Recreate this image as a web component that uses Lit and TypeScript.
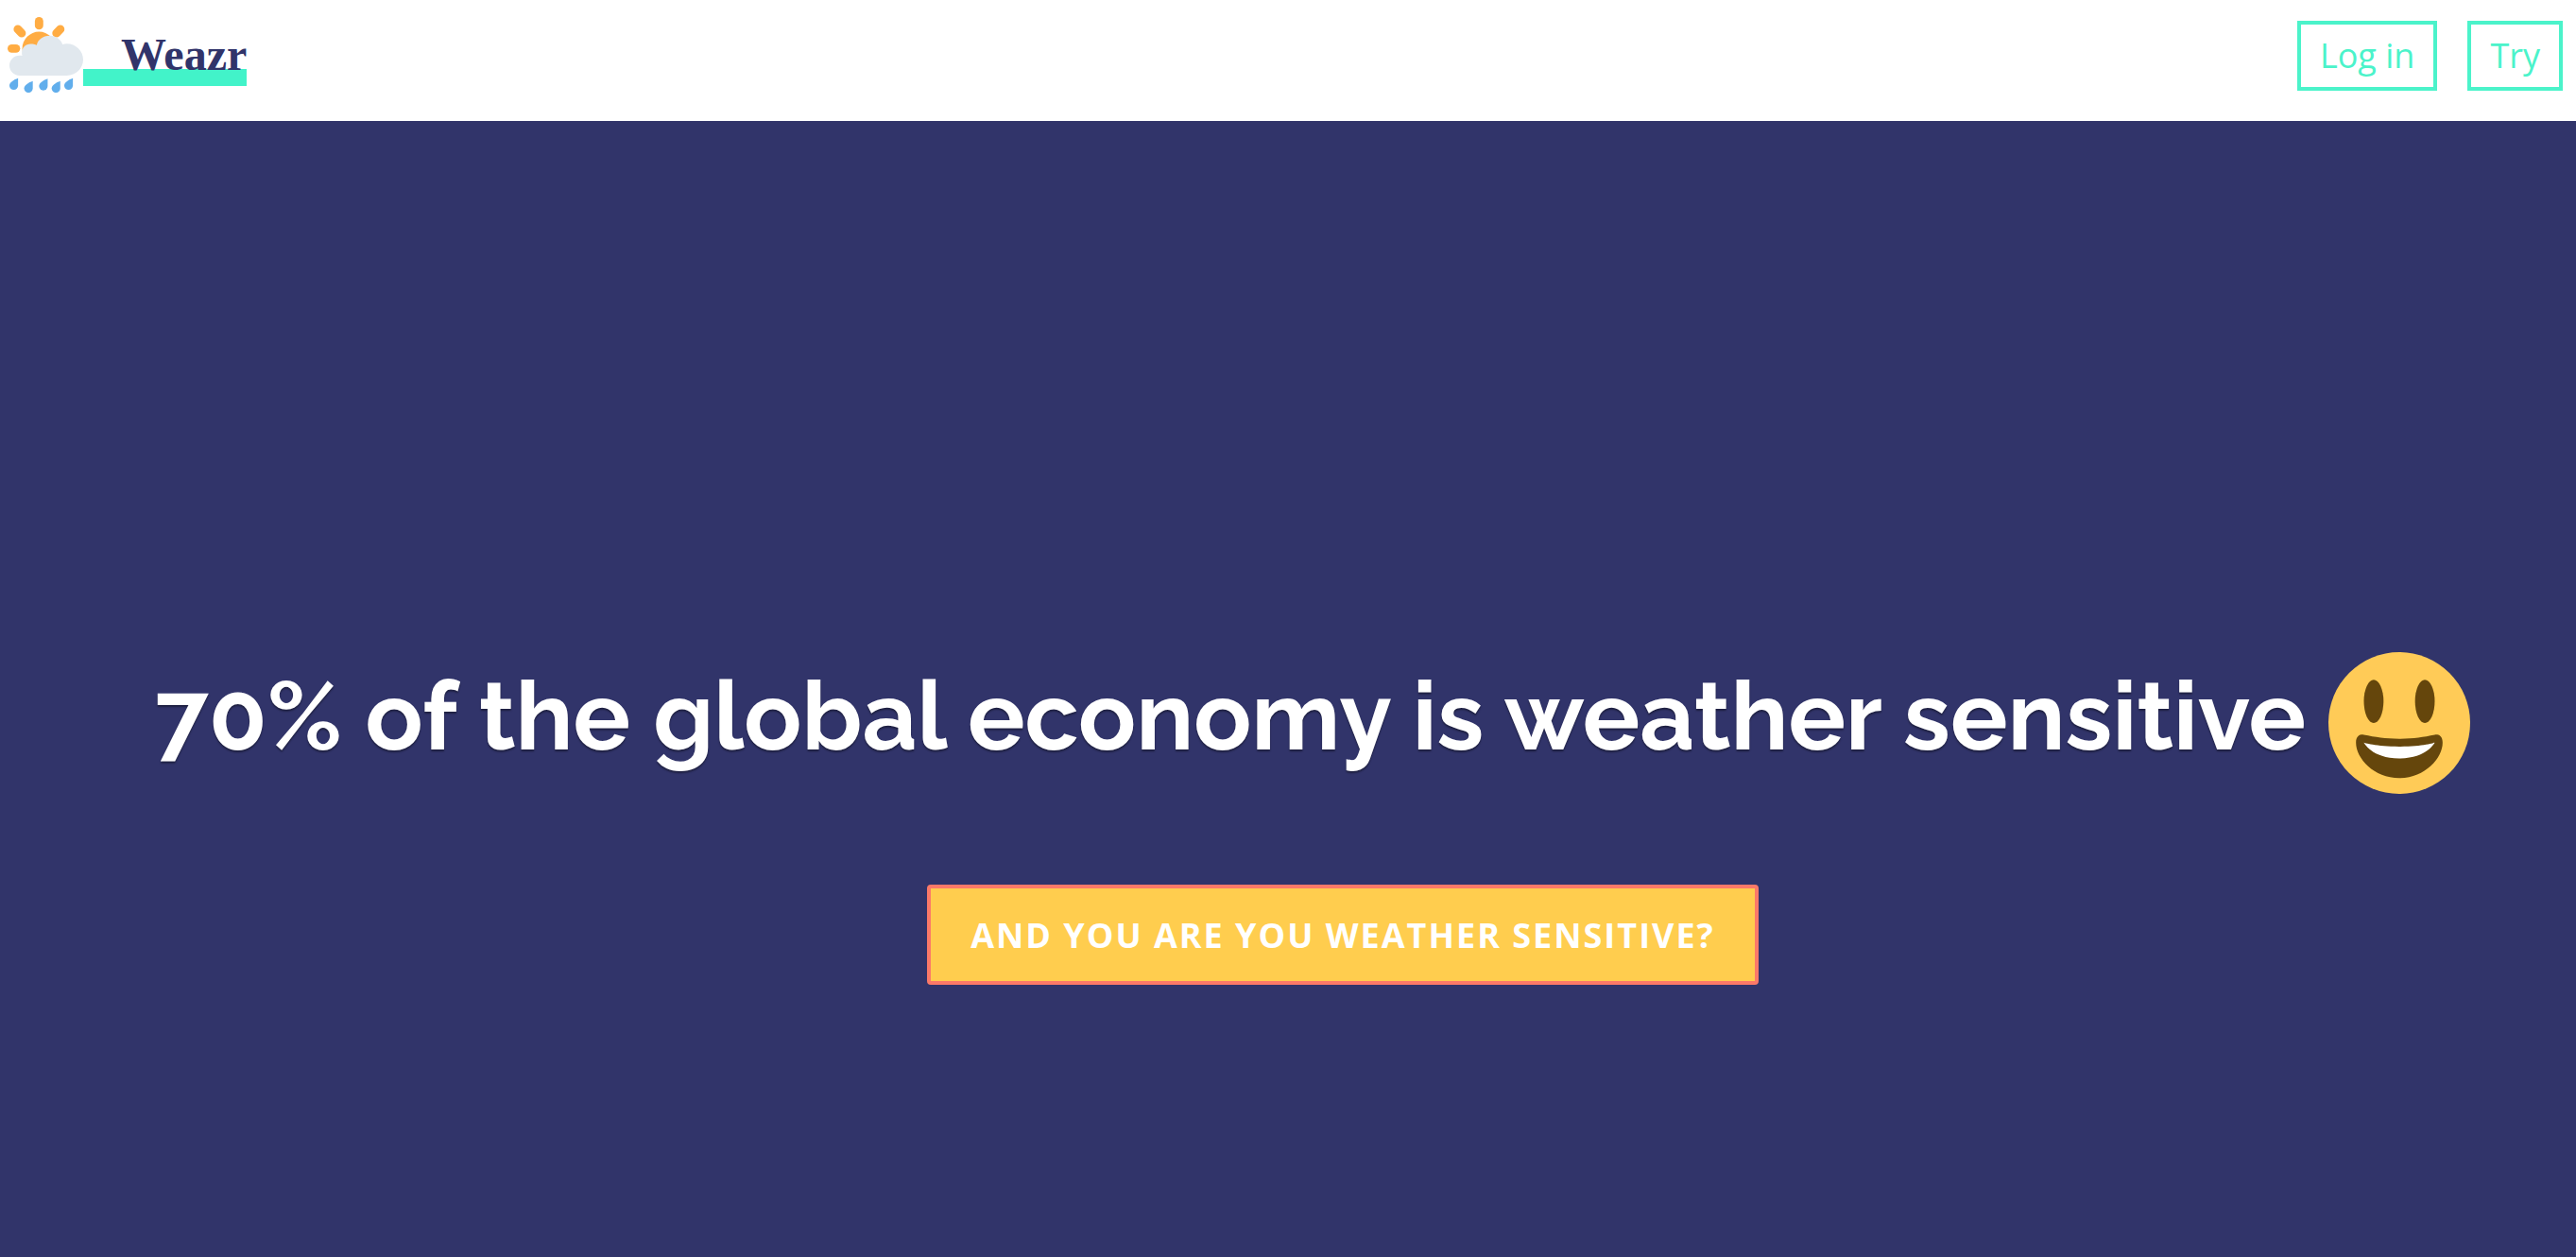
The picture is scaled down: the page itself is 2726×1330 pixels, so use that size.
import { LitElement, html, css, svg } from "lit";
import { customElement } from "lit/decorators.js";

const drops = [
  [0.9, 29.1],
  [7.9, 30.5],
  [15, 29.4],
  [21, 30.5],
  [27, 29.1],
];

@customElement("weather-logo")
class WeatherLogo extends LitElement {
  static styles = css`
    :host {
      display: block;
    }
    .icon {
      display: block;
      width: 80px;
      height: 80px;
    }
  `;

  render() {
    return html`
      <svg class="icon" viewBox="0 0 36 36" aria-hidden="true">
        <g fill="#ffac43">
          <rect x="13" y="0" width="4" height="6" rx="2" />
          <rect x="0" y="13" width="6" height="4" rx="2" />
          <rect x="2.5" y="4.75" width="6.6" height="4" rx="2" transform="rotate(45 5.8 6.75)" />
          <rect x="20.9" y="4.75" width="6.6" height="4" rx="2" transform="rotate(-45 24.2 6.75)" />
          <circle cx="15" cy="15" r="8" />
        </g>
        <path
          fill="#e1e8ee"
          d="M28.2 12.7c-.7 0-1.4.1-2 .3C25.300 10.600 23 8.900 20.100 8.900c-3.300 0-5.800 2-6.200 4.500-.8-.4-1.800-.6-2.900-.6-2.500 0-4.200 1.800-4.200 4.200 0 .5 0 1 .2 1.500-.5-.2-.9-.2-1.300-.2C3 18.300.9 20.500.9 23.100c0 2.700 2.100 4.800 4.800 4.800h22.500c4.300 0 7.800-3.400 7.800-7.600s-3.500-7.600-7.800-7.600z"
        />
        <g fill="#61aeec">
          ${drops.map(
            ([x, y]) =>
              svg`<path transform="translate(${x} ${y})" d="M4.100 0v3.500A2.050 2.050 0 0 1 0 3.500C0 1.900 2.200.7 4.100 0z" />`
          )}
        </g>
      </svg>
    `;
  }
}

@customElement("smiley-face")
class SmileyFace extends LitElement {
  static styles = css`
    :host {
      display: block;
      flex: none;
    }
    .icon {
      display: block;
      width: 150px;
      height: 150px;
    }
  `;

  render() {
    return html`
      <svg class="icon" viewBox="0 0 36 36" role="img" aria-label="Smiling face">
        <circle cx="18" cy="18" r="18" fill="#ffcb57" />
        <g fill="#65460c">
          <ellipse cx="11.5" cy="12.5" rx="2.5" ry="5.5" />
          <ellipse cx="24.5" cy="12.5" rx="2.5" ry="5.5" />
          <path
            d="M18 22c-3.623 0-6.027-.422-9-1-.679-.131-2 0-2 2 0 4 4.595 9 11 9 6.404 0 11-5 11-9 0-2-1.321-2.132-2-2-2.973.578-5.377 1-9 1z"
          />
        </g>
        <path fill="#fff" d="M9 23s3 1 9 1 9-1 9-1-2 4-9 4-9-4-9-4z" />
      </svg>
    `;
  }
}

@customElement("app-root")
class AppRoot extends LitElement {
  static styles = css`
    :host {
      display: flex;
      flex-direction: column;
      min-height: 100vh;
      font-family: "Open Sans", sans-serif;
      font-size: 36px;
    }
    .header {
      display: flex;
      justify-content: space-between;
      align-items: flex-start;
      box-sizing: border-box;
      height: 128px;
      padding: 18px 14px 0 8px;
      background: #fff;
    }
    .brand {
      display: flex;
      align-items: flex-start;
      text-decoration: none;
    }
    .name {
      margin-top: 12px;
      padding: 0 0 6px 40px;
      font: bold 48px/55px "Liberation Serif", serif;
      color: #31346a;
      background: linear-gradient(transparent 43px, #42f3c9 43px);
    }
    .nav {
      display: flex;
      gap: 32px;
      padding-top: 4px;
    }
    .link {
      box-sizing: border-box;
      height: 74px;
      padding: 0 20px;
      border: 4px solid #4bf3ca;
      line-height: 66px;
      color: #4bf3ca;
      text-decoration: none;
    }
    .hero {
      flex: 1;
      display: flex;
      flex-direction: column;
      align-items: center;
      justify-content: center;
      padding: 274px 0 0 116px;
      background: #31346a;
    }
    .title {
      display: flex;
      align-items: flex-start;
      gap: 24px;
      margin: 0 64px 96px 0;
      font: bold 101px/136px Raleway, Lato, sans-serif;
      color: #fff;
      text-shadow: 0 2px 2px rgba(0, 0, 0, 0.4);
      white-space: nowrap;
    }
    .cta {
      height: 106px;
      padding: 0 42px;
      border: 4px solid #fb7968;
      border-radius: 4px;
      background: #ffcd4e;
      color: #fff;
      font: bold 36px "Open Sans", sans-serif;
      letter-spacing: 2px;
      text-transform: uppercase;
    }
  `;

  render() {
    return html`
      <header class="header">
        <a class="brand" href="#">
          <weather-logo></weather-logo>
          <span class="name">Weazr</span>
        </a>
        <nav class="nav">
          <a class="link" href="#login">Log in</a>
          <a class="link" href="#try">Try</a>
        </nav>
      </header>
      <main class="hero">
        <h1 class="title">
          <span>70% of the global economy is weather sensitive</span>
          <smiley-face></smiley-face>
        </h1>
        <button class="cta" type="button">And you are you weather sensitive?</button>
      </main>
    `;
  }
}
